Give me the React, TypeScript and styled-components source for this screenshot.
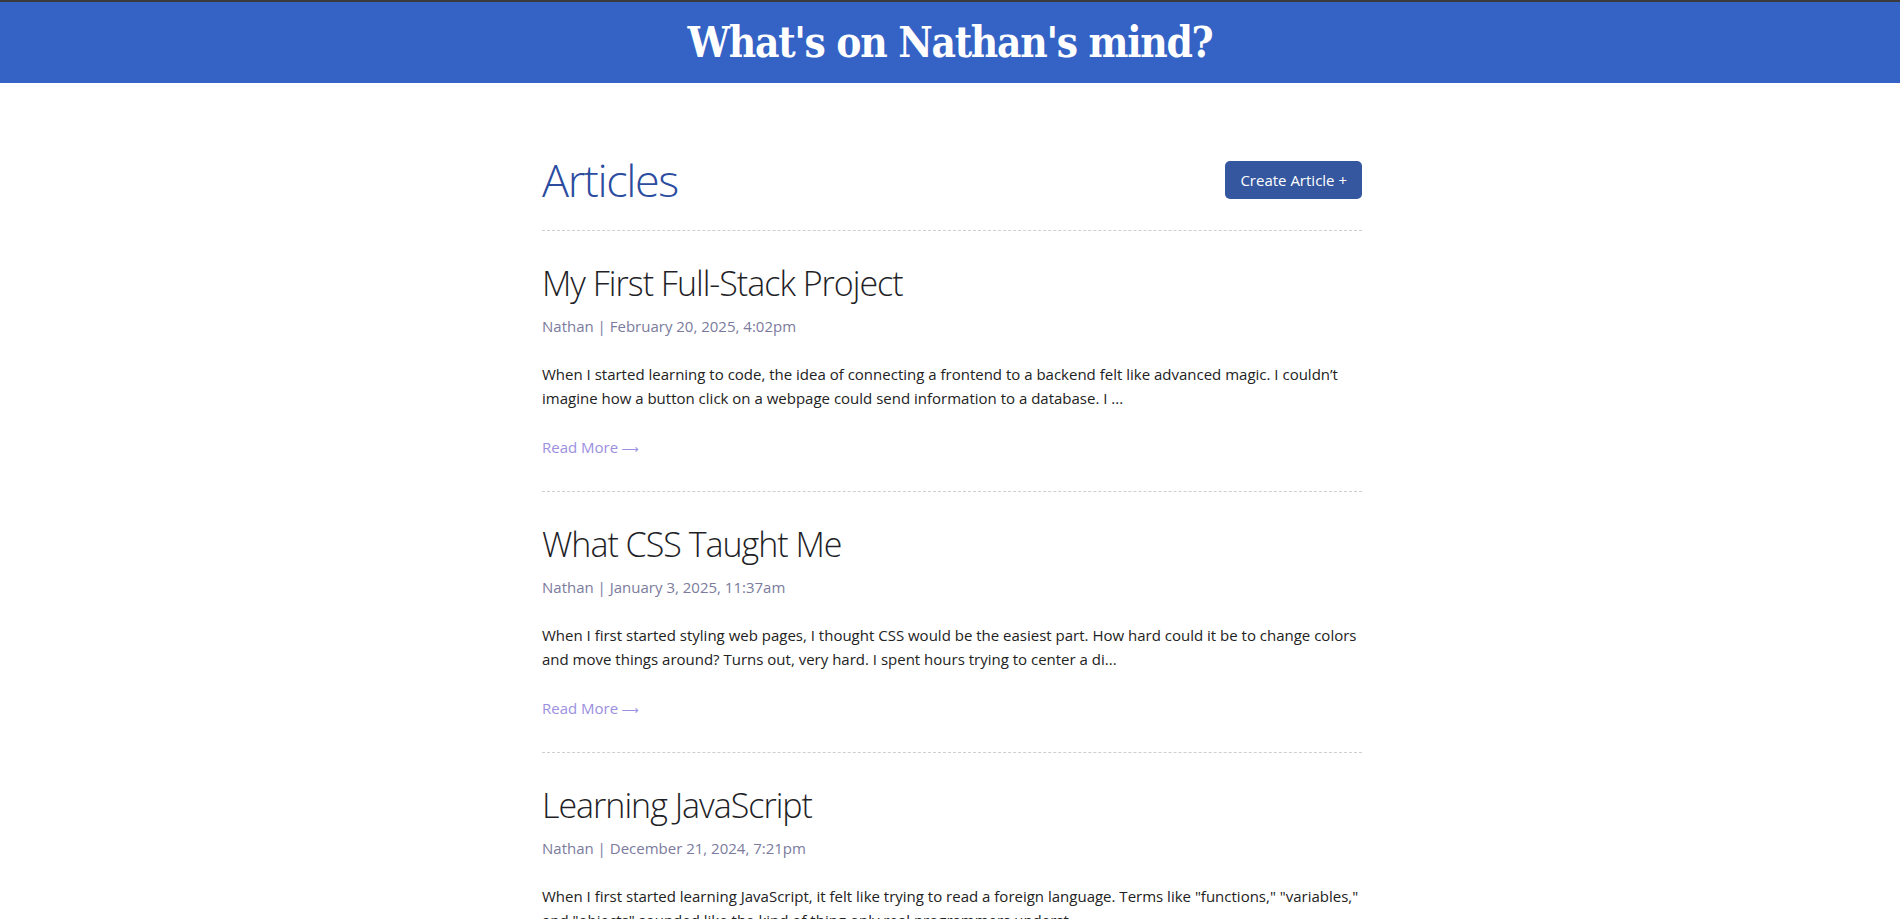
import React from "react";
import styled, { createGlobalStyle } from "styled-components";

const GlobalStyle = createGlobalStyle`
  html, body {
    margin: 0;
    padding: 0;
    background: #ffffff;
  }
  body {
    font-family: "Open Sans", "Noto Sans", sans-serif;
    color: #222222;
    overflow: hidden;
  }
`;

const Header = styled.header`
  height: 81px;
  border-top: 2px solid #3b3b3b;
  background: #3463c5;
  display: flex;
  align-items: center;
  justify-content: center;
`;

const SiteTitle = styled.h1`
  margin: 0;
  font-family: "DejaVu Serif Condensed", "DejaVu Serif", serif;
  font-stretch: condensed;
  font-weight: 700;
  font-size: 42px;
  color: #ffffff;
  letter-spacing: -1.3px;
  line-height: 1;
`;

const Main = styled.main`
  width: 820px;
  margin: 0 0 0 calc(50% - 408px);
`;

const TopBar = styled.div`
  display: flex;
  align-items: center;
  justify-content: space-between;
  padding-top: 66px;
  padding-bottom: 20px;
  border-bottom: 1px dashed #cfcfcf;
`;

const PageTitle = styled.h2`
  margin: 0;
  font-size: 45px;
  font-weight: 300;
  color: #2b4c9f;
  line-height: normal;
  letter-spacing: -1.4px;
`;

const CreateButton = styled.button`
  height: 38px;
  padding: 0 15px;
  border: none;
  border-radius: 5px;
  background: #3557a0;
  color: #ffffff;
  font-family: "Open Sans", sans-serif;
  font-size: 15px;
  cursor: pointer;
`;

const Article = styled.article`
  padding-top: 29px;
  padding-bottom: 33px;
  border-bottom: 1px dashed #cfcfcf;
`;

const ArticleTitle = styled.h3`
  margin: 0;
  font-size: 34px;
  font-weight: 300;
  color: #1f1f28;
  line-height: normal;
  letter-spacing: -1px;
`;

const Meta = styled.div`
  margin-top: 10px;
  font-size: 15px;
  color: #7b7b9d;
  line-height: normal;
`;

const Excerpt = styled.p`
  margin: 26px 0 0;
  font-size: 15px;
  line-height: 24px;
  color: #222222;
`;

const ReadMore = styled.a`
  display: inline-flex;
  align-items: baseline;
  gap: 3px;
  margin-top: 27px;
  font-size: 15px;
  color: #9b8fe0;
  text-decoration: none;
  line-height: normal;
`;

const Arrow = styled.span`
  font-family: "DejaVu Sans", sans-serif;
  font-size: 12px;
  line-height: 1;
`;

const articles = [
  {
    title: "My First Full-Stack Project",
    meta: "Nathan | February 20, 2025, 4:02pm",
    excerpt:
      "When I started learning to code, the idea of connecting a frontend to a backend felt like advanced magic. I couldn\u2019t imagine how a button click on a webpage could send information to a database. I ...",
  },
  {
    title: "What CSS Taught Me",
    meta: "Nathan | January 3, 2025, 11:37am",
    excerpt:
      "When I first started styling web pages, I thought CSS would be the easiest part. How hard could it be to change colors and move things around? Turns out, very hard. I spent hours trying to center a di...",
  },
  {
    title: "Learning JavaScript",
    meta: "Nathan | December 21, 2024, 7:21pm",
    excerpt:
      "When I first started learning JavaScript, it felt like trying to read a foreign language. Terms like \"functions,\" \"variables,\" and \"objects\" sounded like the kind of thing only real programmers underst...",
  },
];

export default function App() {
  return (
    <>
      <GlobalStyle />
      <Header>
        <SiteTitle>What's on Nathan's mind?</SiteTitle>
      </Header>
      <Main>
        <TopBar>
          <PageTitle>Articles</PageTitle>
          <CreateButton>Create Article +</CreateButton>
        </TopBar>
        {articles.map((a) => (
          <Article key={a.title}>
            <ArticleTitle>{a.title}</ArticleTitle>
            <Meta>{a.meta}</Meta>
            <Excerpt>{a.excerpt}</Excerpt>
            <ReadMore href="#">
              Read More<Arrow>&#x27F6;</Arrow>
            </ReadMore>
          </Article>
        ))}
      </Main>
    </>
  );
}
